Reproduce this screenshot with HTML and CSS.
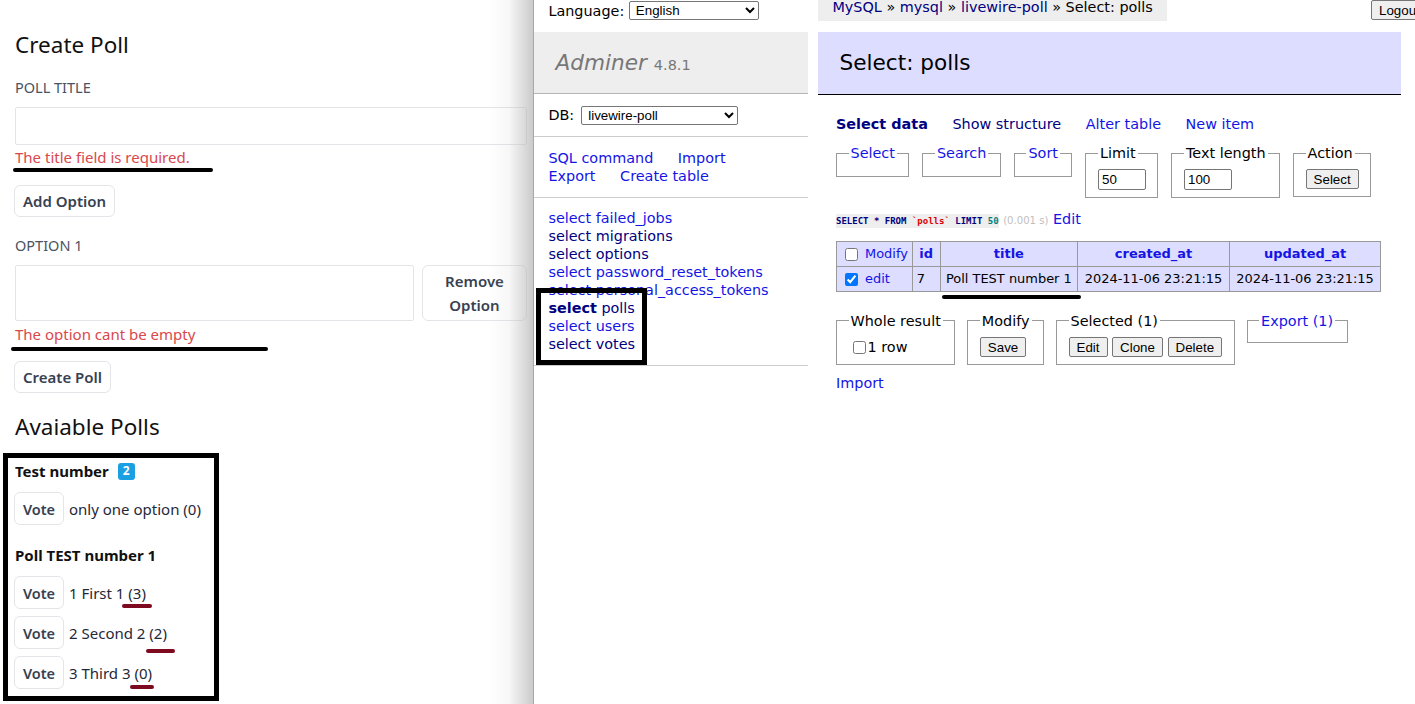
FILE: index.html
```html
<!DOCTYPE html>
<html lang="en">
<head>
<meta charset="utf-8">
<title>Create Poll / Adminer</title>
<link rel="stylesheet" href="styles.css">
</head>
<body>
<div class="screen">
  <section class="app">
    <h2 class="app-title">Create Poll</h2>
    <label class="field-label">POLL TITLE</label>
    <input class="text-input" type="text">
    <p class="error mark-title">The title field is required.</p>
    <button class="btn">Add Option</button>
    <label class="field-label option-label">OPTION 1</label>
    <div class="option-row">
      <input class="text-input option-input" type="text">
      <button class="btn remove-btn">Remove<br>Option</button>
    </div>
    <p class="error mark-option">The option cant be empty</p>
    <button class="btn create-btn">Create Poll</button>
    <h2 class="app-title polls-title">Avaiable Polls</h2>
    <div class="polls">
      <h3 class="poll-name">Test number <span class="badge">2</span></h3>
      <div class="vote-row"><button class="btn vote">Vote</button><span>only one option (0)</span></div>
      <h3 class="poll-name second">Poll TEST number 1</h3>
      <div class="vote-row"><button class="btn vote">Vote</button><span>1 First 1 <span class="count c1">(3)</span></span></div>
      <div class="vote-row tight"><button class="btn vote">Vote</button><span>2 Second 2 <span class="count c2">(2)</span></span></div>
      <div class="vote-row tight"><button class="btn vote">Vote</button><span>3 Third 3 <span class="count c3">(0)</span></span></div>
    </div>
  </section>

  <section class="adminer">
    <aside class="menu">
      <div class="lang">Language:&nbsp;<select class="ctl lang-select"><option>English</option></select></div>
      <h1 class="brand"><a class="brand-name">Adminer</a> <span class="version">4.8.1</span></h1>
      <p class="menu-p dbs">DB: <select class="ctl db-select"><option>livewire-poll</option></select></p>
      <p class="menu-p menu-links">
        <a class="lnk">SQL command</a>
        <a class="lnk">Import</a>
        <a class="lnk">Export</a>
        <a class="lnk">Create table</a>
      </p>
      <ul class="tables">
        <li><a class="lnk">select</a> <a class="lnk">failed_jobs</a></li>
        <li><a class="vis">select</a> <a class="vis">migrations</a></li>
        <li><a class="vis">select</a> <a class="vis">options</a></li>
        <li><a class="lnk">select</a> <a class="lnk">password_reset_tokens</a></li>
        <li><a class="lnk">select</a> <a class="lnk">personal_access_tokens</a></li>
        <li><a class="vis active">select</a> <a class="vis">polls</a></li>
        <li><a class="lnk">select</a> <a class="lnk">users</a></li>
        <li><a class="vis">select</a> <a class="vis">votes</a></li>
      </ul>
    </aside>

    <main class="content">
      <div class="breadcrumb"><a class="vis">MySQL</a> » <a class="vis">mysql</a> » <a class="vis">livewire-poll</a> » Select: polls</div>
      <h2 class="page-title">Select: polls</h2>
      <div class="body">
        <p class="links"><a class="vis active">Select data</a> <a class="vis">Show structure</a> <a class="lnk">Alter table</a> <a class="lnk">New item</a></p>
        <div class="fieldsets">
          <fieldset><legend><a class="lnk">Select</a></legend></fieldset>
          <fieldset><legend><a class="lnk">Search</a></legend></fieldset>
          <fieldset><legend><a class="lnk">Sort</a></legend></fieldset>
          <fieldset><legend>Limit</legend><input class="ctl num" type="text" value="50"></fieldset>
          <fieldset><legend>Text length</legend><input class="ctl num" type="text" value="100"></fieldset>
          <fieldset><legend>Action</legend><button class="ctl pbtn">Select</button></fieldset>
        </div>
        <p class="sql"><code><span class="kw">SELECT * FROM</span> <span class="bac">`polls`</span> <span class="kw">LIMIT</span> <span class="num-lit">50</span></code> <span class="time">(0.001 s)</span> <a class="lnk">Edit</a></p>
        <div class="table-wrap">
          <table class="data">
            <thead>
              <tr><td class="chk"><input type="checkbox"> <a class="lnk">Modify</a></td><th><a class="lnk">id</a></th><th><a class="lnk">title</a></th><th><a class="lnk">created_at</a></th><th><a class="lnk">updated_at</a></th></tr>
            </thead>
            <tbody>
              <tr><td class="chk"><input type="checkbox" checked> <a class="lnk">edit</a></td><td>7</td><td class="wide">Poll TEST number 1</td><td class="date">2024-11-06 23:21:15</td><td class="date">2024-11-06 23:21:15</td></tr>
            </tbody>
          </table>
        </div>
        <div class="fieldsets footer-sets">
          <fieldset><legend>Whole result</legend><label class="row-check"><input type="checkbox">1 row</label></fieldset>
          <fieldset><legend>Modify</legend><button class="ctl pbtn">Save</button></fieldset>
          <fieldset><legend>Selected (1)</legend><button class="ctl pbtn">Edit</button> <button class="ctl pbtn">Clone</button> <button class="ctl pbtn">Delete</button></fieldset>
          <fieldset class="export"><legend><a class="lnk">Export (1)</a></legend></fieldset>
        </div>
        <p class="import"><a class="lnk">Import</a></p>
      </div>
    </main>
    <button class="ctl pbtn logout">Logout</button>
  </section>
</div>
</body>
</html>
```

FILE: styles.css
```css
*, *::before, *::after { box-sizing: border-box; }
html, body { margin: 0; padding: 0; }
body { width: 1415px; height: 704px; overflow: hidden; background: #fff; }
.screen { display: flex; height: 704px; }

/* ---------- left app ---------- */
.app {
  position: relative;
  width: 534px;
  flex: none;
  padding: 29px 6px 0 15px;
  border-right: 1px solid #a9a9a9;
  font-family: "Noto Sans", "Open Sans", sans-serif;
  color: #111827;
  background: #fff;
}
.app::after {
  content: "";
  position: absolute;
  top: 0; right: 0; bottom: 0;
  width: 44px;
  background: linear-gradient(to right, rgba(190,190,190,0), rgba(190,190,190,0.12) 45%, rgba(185,185,185,0.75) 100%);
  pointer-events: none;
}
.app-title { margin: 0; font-size: 22.5px; font-weight: 400; line-height: 32px; color: #111; }
.field-label { display: block; margin-top: 16px; font-size: 14.5px; line-height: 20px; color: #4b5262; }
.option-label { margin-top: 18px; }
.text-input {
  display: block; width: 100%; height: 38px; margin: 10px 0 0;
  border: 1px solid #e2e4e8; border-radius: 2px; background: #fff;
}
.error { position: relative; margin: 2px 0 0; font-size: 15px; line-height: 20px; color: #d9484b; }
.error::after { content: ""; position: absolute; height: 4px; border-radius: 2px; background: #000; }
.mark-title::after { left: -2px; top: 21px; width: 200px; }
.mark-option { margin-top: 3px; }
.mark-option::after { left: -4px; top: 23px; width: 257px; }
.btn {
  display: block; height: 32px; margin: 18px 0 0 -1px; padding: 0 8px;
  border: 1px solid #e3e5e9; border-radius: 6px; background: #fff;
  font-family: "Noto Sans", sans-serif; font-size: 15px; font-weight: 600; color: #374151;
}
.create-btn { margin-top: 17px; }
.option-row { display: flex; gap: 8px; margin-top: 10px; }
.option-input { flex: 1; height: 56px; margin: 0; }
.remove-btn { width: 105px; height: 56px; margin: 0; line-height: 24px; }
.polls-title { margin-top: 18px; }
.polls {
  position: relative;
  width: 216px;
  margin: 10px 0 0 -12px;
  padding: 1px 0 7px 7px;
  border: 5px solid #000;
}
.poll-name { display: flex; align-items: center; gap: 9px; margin: 0; font-size: 15px; font-weight: 700; line-height: 24px; color: #111; }
.poll-name.second { margin-top: 18px; }
.badge {
  display: inline-flex; align-items: center; justify-content: center;
  width: 17px; height: 17px; border-radius: 3px;
  background: #1aa0e2; color: #fff; font-size: 12px; font-weight: 700;
}
.vote-row { display: flex; align-items: center; gap: 5px; margin-top: 9px; font-size: 15px; color: #1f2937; }
.vote-row.tight { margin-top: 7px; }
.vote { width: 50px; height: 33px; margin: 0 0 0 -1px; padding: 0; font-size: 14.5px; }
.count { position: relative; }
.count::after { content: ""; position: absolute; height: 4px; border-radius: 2px; background: #7d0a1e; }
.c1::after { left: -6px; right: -6px; top: calc(100% + 1px); }
.c2::after { left: -3px; right: -8px; top: calc(100% + 6px); }
.c3::after { left: -4px; right: -2px; top: calc(100% + 2px); }

/* ---------- adminer ---------- */
.adminer {
  position: relative;
  flex: 1;
  display: flex;
  overflow: hidden;
  font-family: "DejaVu Sans", Verdana, sans-serif;
  font-size: 14.4px;
  line-height: 1.25;
  color: #000;
}
.lnk { color: #1414e6; text-decoration: none; }
.vis { color: #000080; text-decoration: none; }
.active { font-weight: bold; }
.ctl { font-family: "Liberation Sans", Arial, sans-serif; font-size: 13.33px; color: #000; }
select.ctl { height: 19px; border: 1px solid #767676; border-radius: 2px; background: #fff; padding: 0 0 0 2px; }

.menu { width: 274px; flex: none; }
.lang { display: flex; align-items: center; height: 32px; padding: 1px 0 12px 14.4px; white-space: nowrap; }
.lang-select { width: 130px; }
.brand {
  height: 62px; margin: 0; padding: 17px 21.6px 0; background: #eee; border-bottom: 1px solid #b5b5b5;
  font-size: 21.6px; font-weight: normal; line-height: 27px; white-space: nowrap;
}
.brand-name { color: #777; font-style: italic; text-decoration: none; }
.version { color: #777; font-size: 67%; line-height: 0; }
.menu-p { margin: 0; padding: 11.52px 14.4px; border-bottom: 1px solid #ccc; }
.dbs { display: flex; align-items: center; gap: 7px; height: 43px; }
.db-select { width: 157px; height: 18px; }
.menu-links { padding-bottom: 12px; }
.menu-links a { margin-right: 20px; white-space: nowrap; }
.tables { position: relative; margin: 0; padding: 11.52px 14.4px; list-style: none; border-bottom: 1px solid #ccc; }
.tables li { white-space: nowrap; line-height: 18px; }
.tables::after {
  content: ""; position: absolute; left: 2px; top: 90px; width: 111px; height: 77px;
  border: 5px solid #000;
}

.content { flex: 1; min-width: 0; padding: 0 14px 0 10px; }
.breadcrumb {
  width: fit-content; height: 21px; padding: 0 14.4px; background: #eee;
  line-height: 15px; white-space: nowrap; overflow: hidden;
}
.page-title {
  margin: 11px 0 20px; padding: 17.28px 21.6px; background: #ddf; border-bottom: 1px solid #000;
  font-size: 21.6px; font-weight: normal; line-height: 27px;
}
.body { margin-left: 18px; }
.links { margin: 0; }
.links a { margin-right: 20px; white-space: nowrap; }
.fieldsets { display: flex; align-items: flex-start; gap: 13px; }
fieldset {
  margin: 11.52px 0 0; padding: 7.2px 11.52px; min-width: 0;
  border: 1px solid #999;
}
legend { padding: 0 2px; }
.num { display: block; width: 48px; height: 21px; padding: 1px 3px; border: 1px solid #767676; border-radius: 2px; }
.pbtn {
  height: 20px; padding: 1px 7px; border: 1px solid #767676; border-radius: 2px;
  background: #efefef; vertical-align: middle;
}
.sql { margin: 12px 0 0; line-height: 18px; white-space: nowrap; }
code {
  font-family: "DejaVu Sans Mono", "Liberation Mono", monospace; font-size: 9px; font-weight: bold;
  background: #eee; padding: 2px 0;
}
.kw { color: #000080; }
.bac { color: #d00; }
.num-lit { color: #008080; }
.time { color: #c0c0c0; font-size: 70%; }

.table-wrap { position: relative; width: fit-content; margin-top: 11px; }
.table-wrap::after {
  content: ""; position: absolute; left: 106px; top: 54px; width: 139px; height: 4px;
  border-radius: 2px; background: #000;
}
.data { border-collapse: collapse; font-size: 12.96px; line-height: 1.25; }
.data td, .data th { height: 25px; border: 1px solid #999; padding: 0 3.9px; background: #ddf; white-space: nowrap; }
.data th { padding: 0 6.5px; text-align: center; font-weight: bold; }
.data td.wide { padding: 0 5.4px; }
.data td.date { padding: 0 6.5px; }
.data input[type=checkbox] { margin: 0 3px 0 4px; vertical-align: middle; }
.chk a { vertical-align: middle; }

.footer-sets { margin-top: 8px; gap: 12px; }
.row-check { display: flex; align-items: center; gap: 2px; height: 20px; }
.row-check input { margin: 0 0 0 4px; }
.export { padding-bottom: 5px; }
.import { margin: 9px 0 0; }

.logout { position: absolute; top: 0; left: 837px; }
```
